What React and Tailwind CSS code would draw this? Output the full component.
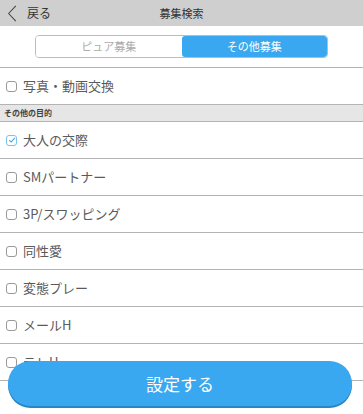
import React from 'react'

const items = ['大人の交際', 'SMパートナー', '3P/スワッピング', '同性愛', '変態プレー', 'メールH', 'テレH']

function Box({ checked }) {
  return (
    <span
      className={`flex h-[11px] w-[11px] shrink-0 items-center justify-center rounded-[3px] border bg-white ${
        checked ? 'border-[#7cc0ee]' : 'border-[#999]'
      }`}
    >
      {checked && (
        <svg viewBox="0 0 10 10" className="h-[8px] w-[8px]">
          <path d="M1.5 5.2 L4 7.6 L8.6 2.4" fill="none" stroke="#3aa0e8" strokeWidth="1.3" />
        </svg>
      )}
    </span>
  )
}

function Row({ label, checked }) {
  return (
    <div className="flex h-[37px] items-center gap-[6px] border-b border-[#b4b4b4] pl-[6px] text-[13px] text-[#5a5a5a]">
      <Box checked={checked} />
      <span>{label}</span>
    </div>
  )
}

export default function App() {
  return (
    <div
      className="relative h-[414px] w-[363px] overflow-hidden bg-white"
      style={{ fontFamily: '"Noto Sans CJK JP", "Noto Sans", sans-serif' }}
    >
      {/* Header */}
      <div className="relative flex h-[26px] items-center bg-[#cfcfcf]">
        <div className="flex items-center gap-[10px] pl-[7px] text-[12px] text-[#333]">
          <svg viewBox="0 0 10 18" className="h-[17px] w-[10px]">
            <path d="M9 1 L1.5 9 L9 17" fill="none" stroke="#444" strokeWidth="1.1" />
          </svg>
          <span>戻る</span>
        </div>
        <div className="absolute inset-0 flex items-center justify-center text-[11px] text-[#333]">募集検索</div>
      </div>

      {/* Tabs */}
      <div className="flex h-[42px] items-center justify-center border-b border-[#b4b4b4]">
        <div className="flex h-[23px] w-[293px] overflow-hidden rounded-[4px] border border-[#bcbcbc] text-[11px]">
          <div className="flex flex-1 items-center justify-center bg-white text-[#aaa]">ピュア募集</div>
          <div className="flex flex-1 items-center justify-center rounded-[3px] bg-[#3aa8f0] text-white">その他募集</div>
        </div>
      </div>

      <Row label="写真・動画交換" />

      <div className="flex h-[17px] items-center border-b border-[#b4b4b4] bg-[#e6e6e6] pl-[4px] text-[8px] font-bold text-[#444]">
        その他の目的
      </div>

      {items.map((it, i) => (
        <Row key={it} label={it} checked={i === 0} />
      ))}

      {/* Submit button */}
      <div className="absolute bottom-[8px] left-[8px] right-[11px]">
        <button className="flex h-[45px] w-full items-center justify-center rounded-full bg-[#39a8f0] text-[17px] text-white shadow-[0_2px_0_#2a86c4]">
          設定する
        </button>
      </div>
    </div>
  )
}
